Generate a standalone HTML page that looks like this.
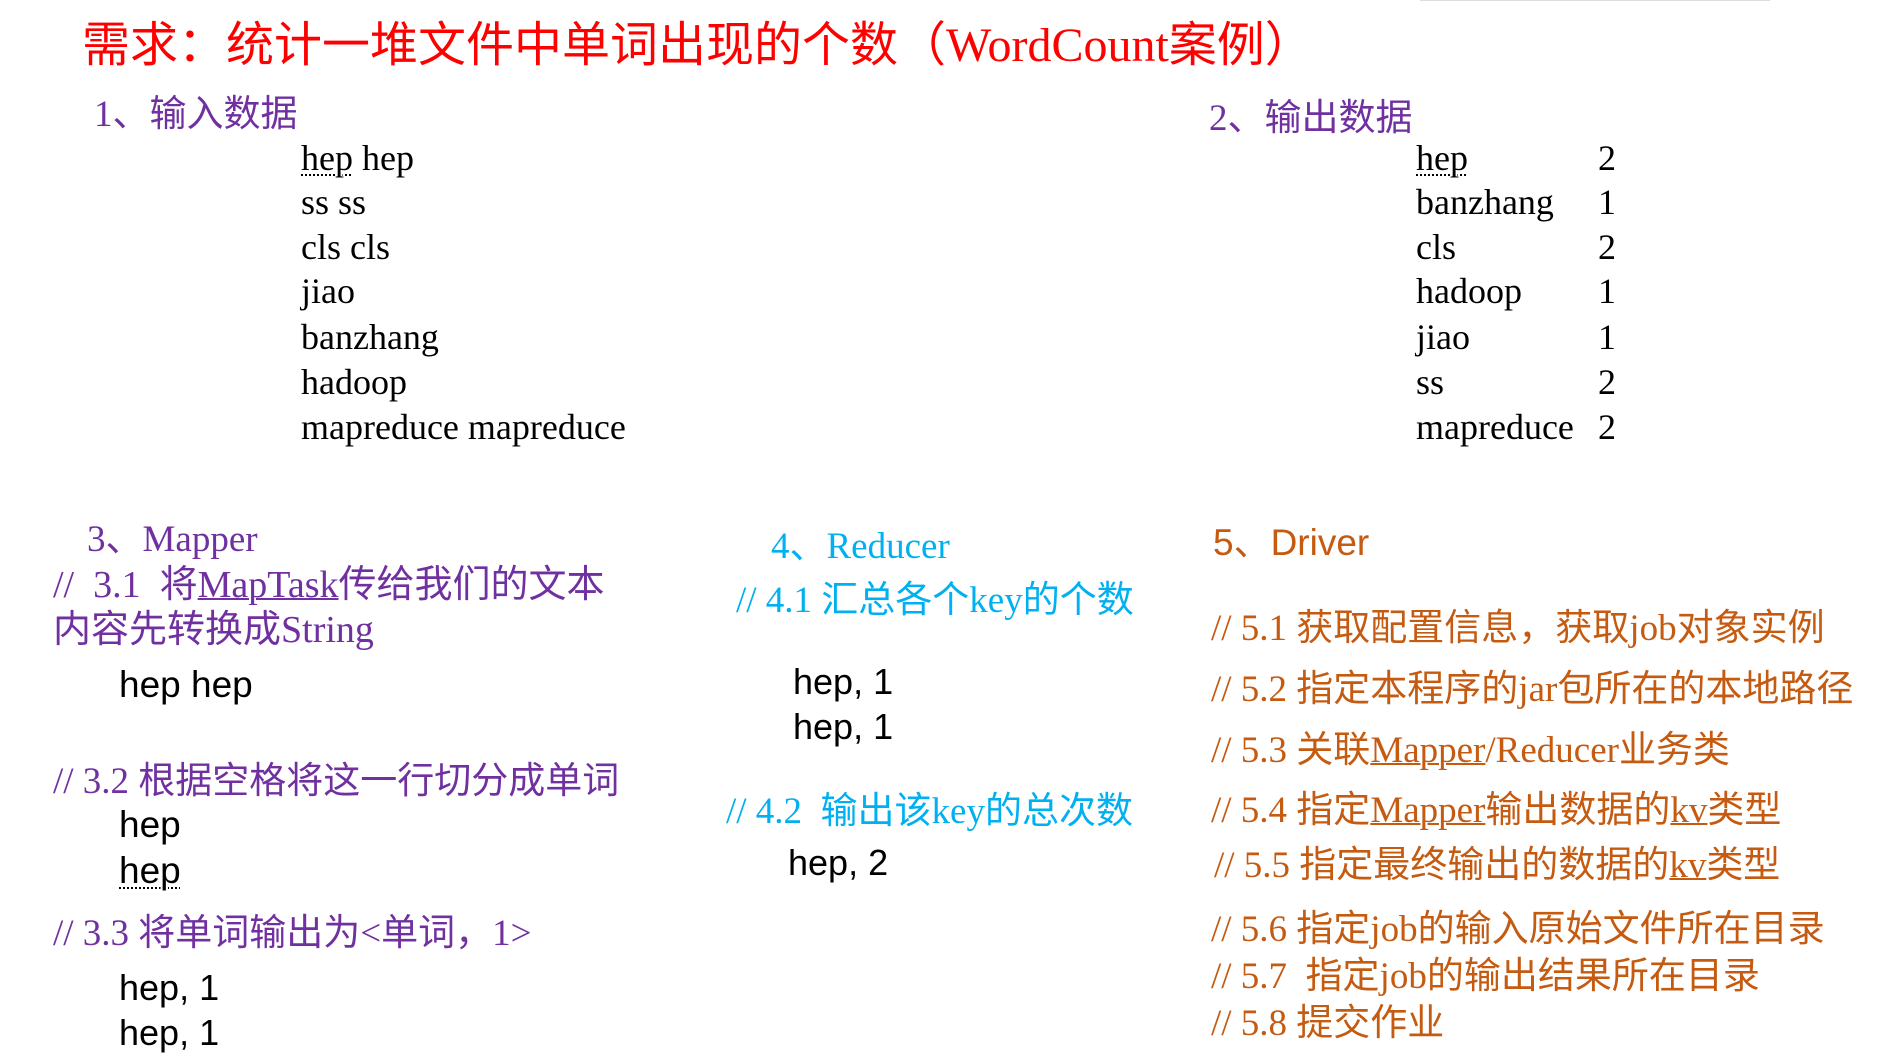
<!DOCTYPE html>
<html><head><meta charset="utf-8"><style>
body{margin:0;width:1877px;height:1064px;background:#fff;position:relative;overflow:hidden;font-family:"Liberation Serif","Noto Sans CJK SC",serif;}
.t{position:absolute;white-space:nowrap;line-height:1.2;}
.p{color:#7030a0}
.c{color:#00b0f0}
.o{color:#c55a11}
.k{color:#000;font-size:36px}
.s{font-family:"Liberation Sans","Noto Sans CJK SC",sans-serif}
u{text-decoration-thickness:2px}
.d{text-decoration:underline dotted 2px;text-underline-offset:4px}
</style></head><body>
<div style="position:absolute;left:1420px;top:0;width:350px;height:1px;background:#ddd"></div>
<div class="t" style="left:82px;top:17px;font-size:48px;color:#f00">需求：统计一堆文件中单词出现的个数（WordCount案例）</div>

<div class="t p" style="left:94px;top:93px;font-size:37px">1、输入数据</div>
<div class="t k" style="left:301px;top:137px"><span class="d">hep</span> hep</div>
<div class="t k" style="left:301px;top:181px">ss ss</div>
<div class="t k" style="left:301px;top:226px">cls cls</div>
<div class="t k" style="left:301px;top:270px">jiao</div>
<div class="t k" style="left:301px;top:316px">banzhang</div>
<div class="t k" style="left:301px;top:361px">hadoop</div>
<div class="t k" style="left:301px;top:406px">mapreduce mapreduce</div>

<div class="t p" style="left:1209px;top:97px;font-size:37px">2、输出数据</div>
<div class="t k" style="left:1416px;top:137px"><span class="d">hep</span></div>
<div class="t k" style="left:1416px;top:181px">banzhang</div>
<div class="t k" style="left:1416px;top:226px">cls</div>
<div class="t k" style="left:1416px;top:270px">hadoop</div>
<div class="t k" style="left:1416px;top:316px">jiao</div>
<div class="t k" style="left:1416px;top:361px">ss</div>
<div class="t k" style="left:1416px;top:406px">mapreduce</div>
<div class="t k" style="left:1598px;top:137px">2</div>
<div class="t k" style="left:1598px;top:181px">1</div>
<div class="t k" style="left:1598px;top:226px">2</div>
<div class="t k" style="left:1598px;top:270px">1</div>
<div class="t k" style="left:1598px;top:316px">1</div>
<div class="t k" style="left:1598px;top:361px">2</div>
<div class="t k" style="left:1598px;top:406px">2</div>

<div class="t p" style="left:87px;top:518px;font-size:37px">3、Mapper</div>
<div class="t p" style="left:53px;top:563px;font-size:38px">//&nbsp; 3.1&nbsp; 将<u>MapTask</u>传给我们的文本</div>
<div class="t p" style="left:53px;top:608px;font-size:38px">内容先转换成String</div>
<div class="t k s" style="left:119px;top:663px;font-size:37px">hep hep</div>
<div class="t p" style="left:53px;top:760px;font-size:37px">// 3.2 根据空格将这一行切分成单词</div>
<div class="t k s" style="left:119px;top:803px;font-size:37px">hep</div>
<div class="t k s" style="left:119px;top:849px;font-size:37px"><span class="d">hep</span></div>
<div class="t p" style="left:53px;top:912px;font-size:37px">// 3.3 将单词输出为&lt;单词，1&gt;</div>
<div class="t k s" style="left:119px;top:966px">hep, 1</div>
<div class="t k s" style="left:119px;top:1011px">hep, 1</div>

<div class="t c" style="left:771px;top:525px;font-size:37px">4、Reducer</div>
<div class="t c" style="left:736px;top:579px;font-size:37px">// 4.1 汇总各个key的个数</div>
<div class="t k s" style="left:793px;top:660px">hep, 1</div>
<div class="t k s" style="left:793px;top:705px">hep, 1</div>
<div class="t c" style="left:726px;top:790px;font-size:37px">// 4.2&nbsp; 输出该key的总次数</div>
<div class="t k s" style="left:788px;top:841px">hep, 2</div>

<div class="t o s" style="left:1213px;top:521px;font-size:37px">5、Driver</div>
<div class="t o" style="left:1211px;top:607px;font-size:37px">// 5.1 获取配置信息，获取job对象实例</div>
<div class="t o" style="left:1211px;top:668px;font-size:37px">// 5.2 指定本程序的jar包所在的本地路径</div>
<div class="t o" style="left:1211px;top:729px;font-size:37px">// 5.3 关联<u>Mapper</u>/Reducer业务类</div>
<div class="t o" style="left:1211px;top:789px;font-size:37px">// 5.4 指定<u>Mapper</u>输出数据的<u>kv</u>类型</div>
<div class="t o" style="left:1214px;top:844px;font-size:37px">// 5.5 指定最终输出的数据的<u>kv</u>类型</div>
<div class="t o" style="left:1211px;top:908px;font-size:37px">// 5.6 指定job的输入原始文件所在目录</div>
<div class="t o" style="left:1211px;top:955px;font-size:37px">// 5.7&nbsp; 指定job的输出结果所在目录</div>
<div class="t o" style="left:1211px;top:1002px;font-size:37px">// 5.8 提交作业</div>
</body></html>
